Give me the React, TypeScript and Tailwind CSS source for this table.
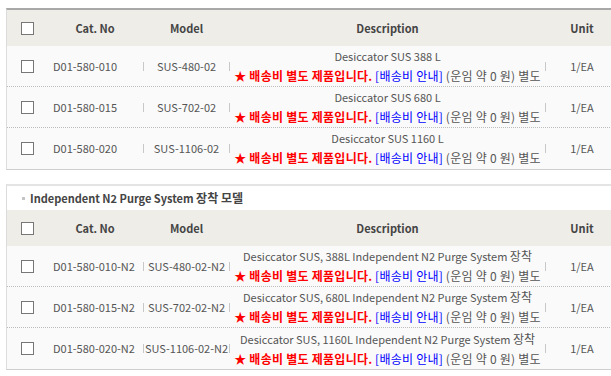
const font = { fontFamily: '"Noto Sans CJK KR", "Noto Sans", sans-serif' };

type Row = { cat: string; model: string; desc: string; suffix?: string };

const rowsA: Row[] = [
  { cat: "D01-580-010", model: "SUS-480-02", desc: "Desiccator SUS 388 L" },
  { cat: "D01-580-015", model: "SUS-702-02", desc: "Desiccator SUS 680 L" },
  { cat: "D01-580-020", model: "SUS-1106-02", desc: "Desiccator SUS 1160 L" },
];

const rowsB: Row[] = [
  { cat: "D01-580-010-N2", model: "SUS-480-02-N2", desc: "Desiccator SUS, 388L Independent N2 Purge System ", suffix: "장착" },
  { cat: "D01-580-015-N2", model: "SUS-702-02-N2", desc: "Desiccator SUS, 680L Independent N2 Purge System ", suffix: "장착" },
  { cat: "D01-580-020-N2", model: "SUS-1106-02-N2", desc: "Desiccator SUS, 1160L Independent N2 Purge System ", suffix: "장착" },
];

const Ko = ({ children }: { children: React.ReactNode }) => <span className="text-[12px]">{children}</span>;

const Box = () => <span className="block w-[13px] h-[13px] border border-[#777] bg-white" />;

const Sep = ({ show }: { show: boolean }) => (
  <span className={`w-px h-[9px] self-center shrink-0 ${show ? "bg-[#c8c8c8]" : "bg-transparent"}`} />
);

const Header = () => (
  <div className="flex h-[36px] bg-[#efede8] text-[11px] font-bold text-[#444] items-center">
    <div className="w-[40px] flex justify-center pl-px"><Box /></div>
    <div className="w-[96px] text-center">Cat. No</div>
    <Sep show={false} />
    <div className="w-[85px] text-center">Model</div>
    <Sep show={false} />
    <div className="w-[315px] text-center">Description</div>
    <Sep show={false} />
    <div className="flex-1 text-center">Unit</div>
  </div>
);

const DataRow = ({ r, last }: { r: Row; last: boolean }) => (
  <div
    className={`flex h-[41px] bg-[#fafafa] text-[11px] text-[#555] items-center ${
      last ? "" : "border-b border-dotted border-[#bdbdbd]"
    }`}
  >
    <div className="w-[40px] flex justify-center pl-px"><Box /></div>
    <div className="w-[96px] pl-[6px] whitespace-nowrap">{r.cat}</div>
    <Sep show />
    <div className="w-[85px] text-center whitespace-nowrap">{r.model}</div>
    <Sep show />
    <div className="w-[315px] text-center leading-[19px]">
      <div className="whitespace-nowrap">
        {r.desc}
        {r.suffix && <Ko>{r.suffix}</Ko>}
      </div>
      <div className="whitespace-nowrap tracking-[0.25px]">
        <span className="text-[#ff0000] font-bold text-[12px]">★ 배송비 별도 제품입니다.</span>{" "}
        <span className="text-[#0000ff] text-[12px]">[배송비 안내]</span> <Ko>(운임 약 0 원) 별도</Ko>
      </div>
    </div>
    <Sep show />
    <div className="flex-1 text-center">1/EA</div>
  </div>
);

export default function App() {
  return (
    <div className="w-[611px] h-[376px] bg-white overflow-hidden pt-[8px] pl-[6px]" style={font}>
      <div className="w-[612px] border-t-2 border-t-[#a8a8a8] border-l border-l-[#dcdcdc] border-b border-b-[#cfcfcf]">
        <Header />
        {rowsA.map((r, i) => (
          <DataRow key={r.cat} r={r} last={i === rowsA.length - 1} />
        ))}
      </div>

      <div className="mt-[14px] w-[612px] border-t-2 border-t-[#e4e4e4] border-l border-l-[#dcdcdc] border-b border-b-[#cfcfcf]">
        <div className="h-[24px] flex items-center bg-white pl-[15px] gap-[5px] text-[11px] font-bold text-[#444]">
          <span className="w-[3px] h-[3px] bg-[#c4c4c4]" />
          <span>
            Independent N2 Purge System <Ko>장착 모델</Ko>
          </span>
        </div>
        <Header />
        {rowsB.map((r, i) => (
          <DataRow key={r.cat} r={r} last={i === rowsB.length - 1} />
        ))}
      </div>
    </div>
  );
}
